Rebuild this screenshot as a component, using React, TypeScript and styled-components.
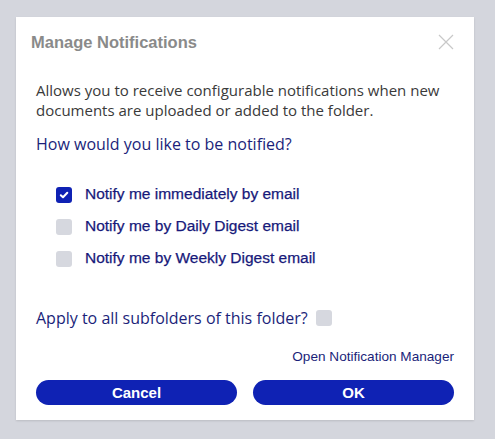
import React from 'react';
import styled, { createGlobalStyle } from 'styled-components';

const colors = {
  page: '#d4d6dd',
  card: '#ffffff',
  title: '#8a8a8a',
  body: '#3a3a3a',
  navy: '#1b1f7a',
  primary: '#0f22b4',
  unchecked: '#d6d8df',
  close: '#c8c8c8',
};

const GlobalStyle = createGlobalStyle`
  html, body {
    margin: 0;
    padding: 0;
    background: ${colors.page};
  }
  body {
    font-family: "Liberation Sans", Arial, sans-serif;
  }
`;

const options = [
  { label: 'Notify me immediately by email', checked: true },
  { label: 'Notify me by Daily Digest email', checked: false },
  { label: 'Notify me by Weekly Digest email', checked: false },
];

function Checkbox({ checked }: { checked: boolean }) {
  return (
    <Box $checked={checked}>
      {checked && (
        <svg width="10" height="10" viewBox="0 0 10 10">
          <path d="M1.8 5.2 L4 7.3 L8.3 2.8" fill="none" stroke="#fff" strokeWidth="2" strokeLinecap="round" strokeLinejoin="round" />
        </svg>
      )}
    </Box>
  );
}

export default function App() {
  return (
    <Page>
      <GlobalStyle />
      <Dialog>
        <Header>
          <Title>Manage Notifications</Title>
          <Close aria-label="Close">
            <svg width="16" height="16" viewBox="0 0 16 16">
              <path d="M1 1 L15 15 M15 1 L1 15" stroke={colors.close} strokeWidth="1.2" />
            </svg>
          </Close>
        </Header>
        <Body>
          <Intro>
            Allows you to receive configurable notifications when new documents are uploaded or added to the folder.
          </Intro>
          <Question>How would you like to be notified?</Question>
          <OptionList>
            {options.map((o) => (
              <OptionRow key={o.label}>
                <Checkbox checked={o.checked} />
                <OptionLabel>{o.label}</OptionLabel>
              </OptionRow>
            ))}
          </OptionList>
          <ApplyRow>
            Apply to all subfolders of this folder?
            <Checkbox checked={false} />
          </ApplyRow>
          <ManagerLink href="#">Open Notification Manager</ManagerLink>
          <Buttons>
            <Button>Cancel</Button>
            <Button>OK</Button>
          </Buttons>
        </Body>
      </Dialog>
    </Page>
  );
}

const Page = styled.div`
  width: 495px;
  height: 439px;
  padding: 17px 21px 0 16px;
  box-sizing: border-box;
`;

const Dialog = styled.div`
  width: 458px;
  height: 403px;
  background: ${colors.card};
  box-shadow: 0 1px 2px rgba(0, 0, 0, 0.12);
  display: flex;
  flex-direction: column;
`;

const Header = styled.div`
  display: flex;
  align-items: center;
  justify-content: space-between;
  padding: 16px 20px 0 15px;
  height: 18px;
`;

const Title = styled.h2`
  margin: 0;
  font-size: 16.5px;
  font-weight: 700;
  color: ${colors.title};
`;

const Close = styled.button`
  border: none;
  background: none;
  padding: 0;
  width: 16px;
  height: 16px;
  display: flex;
`;

const Body = styled.div`
  padding: 29px 20px 0 20px;
  display: flex;
  flex-direction: column;
`;

const Intro = styled.p`
  margin: 0;
  font-family: "Open Sans", sans-serif;
  font-size: 15px;
  line-height: 20px;
  color: ${colors.body};
`;

const Question = styled.p`
  margin: 14px 0 0;
  font-family: "Open Sans", sans-serif;
  font-size: 16px;
  line-height: 20px;
  color: ${colors.navy};
`;

const OptionList = styled.div`
  display: flex;
  flex-direction: column;
  gap: 16px;
  padding: 33px 0 0 20px;
`;

const OptionRow = styled.label`
  display: flex;
  align-items: center;
  gap: 13px;
  height: 16px;
`;

const Box = styled.span<{ $checked: boolean }>`
  width: 16px;
  height: 16px;
  border-radius: 3px;
  background: ${(p) => (p.$checked ? colors.primary : colors.unchecked)};
  display: inline-flex;
  align-items: center;
  justify-content: center;
  flex-shrink: 0;
`;

const OptionLabel = styled.span`
  font-size: 15.5px;
  color: #17197a;
  -webkit-text-stroke: 0.25px #17197a;
  transform: translateY(-1px);
`;

const ApplyRow = styled.label`
  margin-top: 41px;
  display: flex;
  align-items: center;
  gap: 8px;
  font-family: "Open Sans", sans-serif;
  font-size: 16px;
  line-height: 20px;
  color: ${colors.navy};
`;

const ManagerLink = styled.a`
  align-self: flex-end;
  margin-top: 21px;
  font-size: 13.6px;
  line-height: 16px;
  color: ${colors.navy};
  text-decoration: none;
`;

const Buttons = styled.div`
  display: grid;
  grid-template-columns: 1fr 1fr;
  gap: 16px;
  margin-top: 15px;
`;

const Button = styled.button`
  height: 25px;
  border: none;
  border-radius: 13px;
  background: ${colors.primary};
  color: #fff;
  font-family: "Liberation Sans", Arial, sans-serif;
  font-size: 15px;
  font-weight: 700;
  padding: 0;
`;
